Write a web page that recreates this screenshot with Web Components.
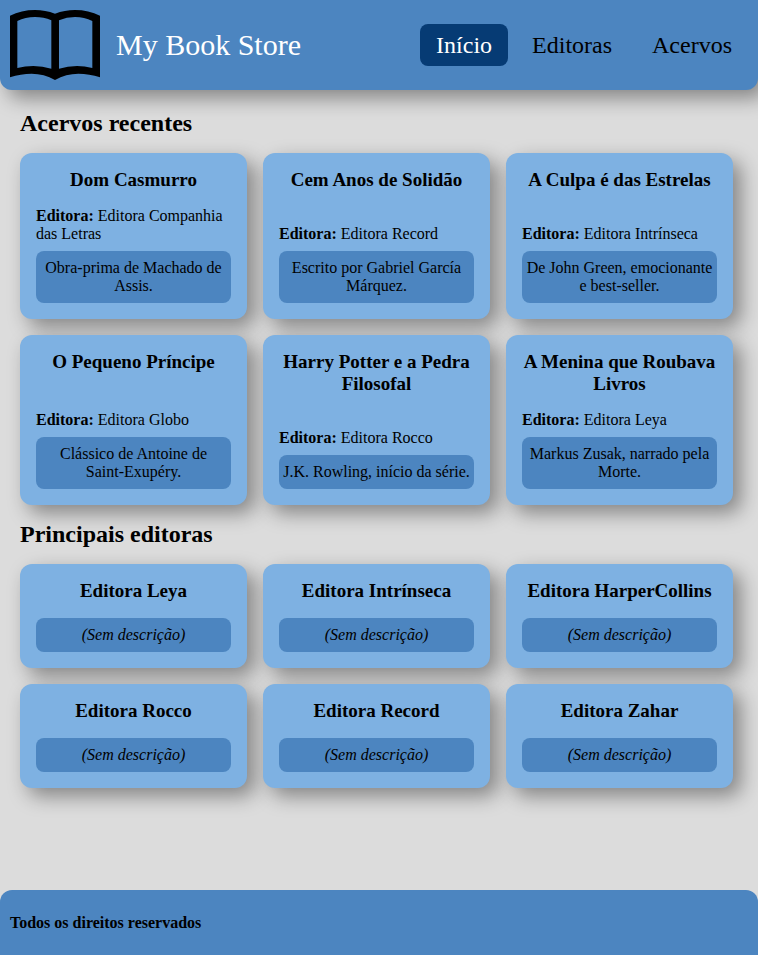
<!DOCTYPE html>
<html lang="pt-BR">
<head>
<meta charset="utf-8">
<meta name="viewport" content="width=device-width, initial-scale=1">
<title>My Book Store</title>
<style>
  :root {
    --page: #dcdcdc;
    --primary: #4c85c0;
    --card: #7eb1e2;
    --active: #063b74;
    --shadow: 8px 8px 20px rgba(0, 0, 0, 0.4);
  }
  body {
    margin: 0;
    min-height: 100vh;
    display: flex;
    flex-direction: column;
    background: var(--page);
    color: #000;
    font: 16px/18px "Liberation Serif", "Times New Roman", serif;
  }
  main {
    flex: 1;
    display: flex;
    flex-direction: column;
    gap: 16px;
    padding: 20px 25px 20px 20px;
  }
</style>
</head>
<body>
<store-header>
  <nav-link href="#inicio" active>Início</nav-link>
  <nav-link href="#editoras">Editoras</nav-link>
  <nav-link href="#acervos">Acervos</nav-link>
</store-header>

<main>
  <card-section heading="Acervos recentes">
    <store-card heading="Dom Casmurro" publisher="Editora Companhia das Letras">Obra-prima de Machado de Assis.</store-card>
    <store-card heading="Cem Anos de Solidão" publisher="Editora Record">Escrito por Gabriel García Márquez.</store-card>
    <store-card heading="A Culpa é das Estrelas" publisher="Editora Intrínseca">De John Green, emocionante e best-seller.</store-card>
    <store-card heading="O Pequeno Príncipe" publisher="Editora Globo">Clássico de Antoine de Saint-Exupéry.</store-card>
    <store-card heading="Harry Potter e a Pedra Filosofal" publisher="Editora Rocco">J.K. Rowling, início da série.</store-card>
    <store-card heading="A Menina que Roubava Livros" publisher="Editora Leya">Markus Zusak, narrado pela Morte.</store-card>
  </card-section>
  <card-section heading="Principais editoras">
    <store-card heading="Editora Leya"></store-card>
    <store-card heading="Editora Intrínseca"></store-card>
    <store-card heading="Editora HarperCollins"></store-card>
    <store-card heading="Editora Rocco"></store-card>
    <store-card heading="Editora Record"></store-card>
    <store-card heading="Editora Zahar"></store-card>
  </card-section>
</main>

<store-footer>Todos os direitos reservados</store-footer>

<script>
  class StoreHeader extends HTMLElement {
    constructor() {
      super();
      this.attachShadow({ mode: "open" }).innerHTML = `
        <style>
          :host { display: block; }
          header {
            display: flex; flex-wrap: wrap; align-items: center; justify-content: space-between;
            gap: 16px; padding: 10px; background: var(--primary);
            border-radius: 0 0 12px 12px; box-shadow: var(--shadow);
          }
          .brand { display: flex; align-items: center; gap: 16px; }
          svg { display: block; width: 90px; height: 70px; }
          h1 { margin: 0; font-size: 30px; line-height: 34px; font-weight: 400; color: #fff; }
          nav { display: flex; gap: 8px; }
        </style>
        <header>
          <div class="brand">
            <svg viewBox="30 30 270 210" aria-hidden="true">
              <path fill-rule="evenodd" d="M30 47Q64 30 105 30Q136 30 165 41Q194 30 225 30Q266 30 300 47V232Q268 221 235 221Q198 221 165 240Q132 221 95 221Q62 221 30 232Z
                M52 63Q76 51 105 51Q131 51 154 61V206Q128 198 100 198Q75 198 52 204Z
                M177 61Q200 51 225 51Q253 51 277 63V204Q254 198 231 198Q203 198 177 206Z"/>
            </svg>
            <h1>My Book Store</h1>
          </div>
          <nav><slot></slot></nav>
        </header>`;
    }
  }

  class NavLink extends HTMLElement {
    constructor() {
      super();
      this.attachShadow({ mode: "open" }).innerHTML = `
        <style>
          :host { display: block; }
          a {
            display: block; padding: 8px 16px; border-radius: 8px;
            font-size: 24px; line-height: 26px; color: #000; text-decoration: none;
          }
          :host([active]) a { background: var(--active); color: #fff; }
        </style>
        <a><slot></slot></a>`;
    }
    connectedCallback() {
      this.shadowRoot.querySelector("a").href = this.getAttribute("href");
    }
  }

  class CardSection extends HTMLElement {
    constructor() {
      super();
      this.attachShadow({ mode: "open" }).innerHTML = `
        <style>
          :host { display: block; }
          section { display: flex; flex-direction: column; gap: 16px; }
          h2 { margin: 0; font-size: 24px; line-height: 27px; }
          .grid { display: grid; grid-template-columns: repeat(3, minmax(0, 1fr)); gap: 16px; }
          @media (max-width: 600px) { .grid { grid-template-columns: 1fr; } }
        </style>
        <section><h2></h2><div class="grid"><slot></slot></div></section>`;
    }
    connectedCallback() {
      this.shadowRoot.querySelector("h2").textContent = this.getAttribute("heading");
    }
  }

  class StoreCard extends HTMLElement {
    constructor() {
      super();
      this.attachShadow({ mode: "open" }).innerHTML = `
        <style>
          :host { display: block; }
          article {
            box-sizing: border-box; height: 100%; display: flex; flex-direction: column; gap: 8px;
            padding: 16px; background: var(--card); border-radius: 12px;
            box-shadow: var(--shadow);
          }
          h3 { margin: 0 0 8px; font-size: 19px; line-height: 22px; text-align: center; }
          p { margin: 0; }
          .publisher { margin-top: auto; }
          .description {
            padding: 8px 4px; background: var(--primary); border-radius: 8px; text-align: center;
          }
          [hidden] { display: none; }
        </style>
        <article>
          <h3></h3>
          <p class="publisher"><strong>Editora:</strong></p>
          <p class="description"><slot><em>(Sem descrição)</em></slot></p>
        </article>`;
    }
    connectedCallback() {
      const root = this.shadowRoot;
      const publisher = root.querySelector(".publisher");
      root.querySelector("h3").textContent = this.getAttribute("heading");
      if (this.hasAttribute("publisher")) {
        publisher.append(" " + this.getAttribute("publisher"));
      } else {
        publisher.remove();
      }
    }
  }

  class StoreFooter extends HTMLElement {
    constructor() {
      super();
      this.attachShadow({ mode: "open" }).innerHTML = `
        <style>
          :host { display: block; }
          footer { padding: 22px 10px; background: var(--primary); border-radius: 12px 12px 0 0; }
          h4 { margin: 0; font-size: 16px; line-height: 21px; }
        </style>
        <footer><h4><slot></slot></h4></footer>`;
    }
  }

  customElements.define("store-header", StoreHeader);
  customElements.define("nav-link", NavLink);
  customElements.define("card-section", CardSection);
  customElements.define("store-card", StoreCard);
  customElements.define("store-footer", StoreFooter);
</script>
</body>
</html>
